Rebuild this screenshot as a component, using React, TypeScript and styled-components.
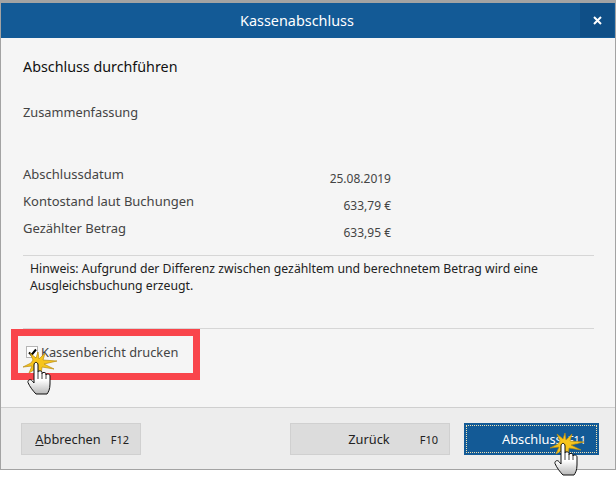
import React from 'react';
import styled, { createGlobalStyle } from 'styled-components';

const GlobalStyle = createGlobalStyle`
  html, body {
    margin: 0;
    padding: 0;
    background: #fff;
  }
  body {
    font-family: "Noto Sans", "Open Sans", sans-serif;
  }
`;

const Page = styled.div`
  width: 616px;
  height: 477px;
  position: relative;
  overflow: hidden;
  padding-bottom: 7px;
  box-sizing: border-box;
`;

const Dialog = styled.div`
  height: 470px;
  box-sizing: border-box;
  display: flex;
  flex-direction: column;
  background: #f5f5f5;
  border-top: 3px solid #a3a3a3;
  border-left: 1px solid #a3a3a3;
  border-right: 1px solid #a3a3a3;
  border-bottom: 1px solid #a3a3a3;
`;

const TitleBar = styled.div`
  height: 35px;
  flex: none;
  position: relative;
  display: flex;
  align-items: center;
  justify-content: center;
  padding-right: 22px;
  background: #135a96;
  color: #fff;
  font-size: 14.4px;
`;

const CloseButton = styled.div`
  position: absolute;
  right: 1px;
  top: 0;
  bottom: 1px;
  width: 34px;
  display: flex;
  align-items: center;
  justify-content: center;
  background: #0f4f87;
`;

const Content = styled.div`
  flex: 1;
  padding: 18px 21px 0 22px;
  display: flex;
  flex-direction: column;
`;

const Heading = styled.h1`
  margin: 0;
  font-size: 14.3px;
  font-weight: 400;
  line-height: 22px;
  color: #111;
`;

const SectionLabel = styled.div`
  margin-top: 25px;
  font-size: 12.8px;
  line-height: 18px;
  color: #444;
`;

const Rows = styled.div`
  margin-top: 44px;
  display: flex;
  flex-direction: column;
  gap: 9px;
`;

const Row = styled.div`
  display: flex;
  justify-content: space-between;
  height: 18px;
  padding-right: 203px;
  font-size: 13px;
  line-height: 18px;
  color: #444;
`;

const Value = styled.span`
  position: relative;
  top: 5px;
  font-size: 12px;
`;

const Notice = styled.div`
  margin-top: 18px;
  border-top: 1px solid #d6d6d6;
  border-bottom: 1px solid #d6d6d6;
  padding: 4px 8px 0 7px;
  height: 68px;
  box-sizing: content-box;
  font-size: 12.25px;
  line-height: 17px;
  color: #222;
`;

const CheckRow = styled.label`
  margin-top: 14px;
  display: flex;
  align-items: center;
  gap: 3px;
  height: 18px;
  font-size: 12.8px;
  color: #444;
`;

const CheckBox = styled.span`
  width: 10px;
  height: 10px;
  margin-left: 3px;
  border: 1px solid #b5b5b5;
  background: #fff;
  display: flex;
  align-items: center;
  justify-content: center;
`;

const Footer = styled.div`
  height: 62px;
  flex: none;
  box-sizing: border-box;
  border-top: 1px solid #cfcfcf;
  background: #ededed;
  padding: 15px 15px 0 20px;
  display: flex;
  align-items: flex-start;
`;

const ActionButton = styled.div<{ $width: number; $primary?: boolean; $gap: number; $pad: number }>`
  width: ${p => p.$width}px;
  height: 32px;
  box-sizing: border-box;
  display: flex;
  align-items: center;
  justify-content: flex-end;
  gap: ${p => p.$gap}px;
  padding-right: ${p => p.$pad}px;
  font-size: 12.8px;
  color: ${p => (p.$primary ? '#fff' : '#222')};
  background: ${p => (p.$primary ? '#135a96' : '#dcdcdc')};
  border: 1px solid ${p => (p.$primary ? '#135a96' : '#d0d0d0')};
  ${p => p.$primary && 'outline: 1px dotted #f0e2b0; outline-offset: -3px;'}
`;

const KeyHint = styled.span`
  font-size: 11px;
`;

const Spacer = styled.div<{ $width: number }>`
  width: ${p => p.$width}px;
  flex: none;
`;

const Mnemonic = styled.span`
  text-decoration: underline;
`;

const Highlight = styled.div`
  position: absolute;
  left: 11px;
  top: 329px;
  width: 189px;
  height: 51px;
  box-sizing: border-box;
  border: 7px solid #f9454b;
  pointer-events: none;
`;

const ClickMark = styled.svg<{ $x: number; $y: number }>`
  position: absolute;
  left: ${p => p.$x}px;
  top: ${p => p.$y}px;
  pointer-events: none;
`;

function HandClick({ x, y, id }: { x: number; y: number; id: string }) {
  return (
    <ClickMark $x={x} $y={y} width="36" height="44" viewBox="0 0 36 44">
      <polygon
        points="10,8 7,1 13,6 15,0 16,7 22,1 20,8 34,9 21,12 31,17 19,15 18,23 14,16 6,21 9,14 0,15 8,11"
        fill="#f7c51c"
        stroke="#b98d12"
        strokeWidth="0.7"
      />
      <defs>
        <linearGradient id={id} x1="0" y1="0" x2="0" y2="1">
          <stop offset="0.55" stopColor="#ffffff" />
          <stop offset="1" stopColor="#b8b8b8" />
        </linearGradient>
      </defs>
      <path
        d="M11 13 C11 9.5 15 9.5 15 13 L15 20 C15 18.4 19 18.4 19 20.4 L19 21.5 C19 20 23 20 23 22 L23 23 C23 21.4 27 21.6 27 24 L27 32 C27 37 25.5 40 24 42 L13 42 C10.5 39.5 6.5 34.5 5 30.5 C4.4 28 7.4 26.6 9 28.6 L11 31 Z"
        fill={`url(#${id})`}
        stroke="#111"
        strokeWidth="1"
        strokeLinejoin="round"
      />
      <path d="M15 20 L15 27 M19 21 L19 27 M23 22.5 L23 27" stroke="#111" strokeWidth="0.8" fill="none" />
    </ClickMark>
  );
}

export default function App() {
  return (
    <>
      <GlobalStyle />
      <Page>
        <Dialog>
          <TitleBar>
            Kassenabschluss
            <CloseButton>
              <svg width="9" height="9" viewBox="0 0 9 9">
                <path d="M1 1 L8 8 M8 1 L1 8" stroke="#fff" strokeWidth="2" />
              </svg>
            </CloseButton>
          </TitleBar>
          <Content>
            <Heading>Abschluss durchführen</Heading>
            <SectionLabel>Zusammenfassung</SectionLabel>
            <Rows>
              <Row>
                <span>Abschlussdatum</span>
                <Value>25.08.2019</Value>
              </Row>
              <Row>
                <span>Kontostand laut Buchungen</span>
                <Value>633,79 €</Value>
              </Row>
              <Row>
                <span>Gezählter Betrag</span>
                <Value>633,95 €</Value>
              </Row>
            </Rows>
            <Notice>
              Hinweis: Aufgrund der Differenz zwischen gezähltem und berechnetem Betrag wird eine
              Ausgleichsbuchung erzeugt.
            </Notice>
            <CheckRow>
              <CheckBox>
                <svg width="9" height="9" viewBox="0 0 9 9">
                  <path d="M1 4.5 L3.5 7 L8 1.5" stroke="#000" strokeWidth="2" fill="none" />
                </svg>
              </CheckBox>
              Kassenbericht drucken
            </CheckRow>
          </Content>
          <Footer>
            <ActionButton $width={120} $gap={10} $pad={11}>
              <span>
                <Mnemonic>A</Mnemonic>bbrechen
              </span>
              <KeyHint>F12</KeyHint>
            </ActionButton>
            <Spacer $width={149} />
            <ActionButton $width={160} $gap={30} $pad={11}>
              <span>Zurück</span>
              <KeyHint>F10</KeyHint>
            </ActionButton>
            <Spacer $width={14} />
            <ActionButton $width={135} $primary $gap={6} $pad={12}>
              <span>Abschluss</span>
              <KeyHint>F11</KeyHint>
            </ActionButton>
          </Footer>
        </Dialog>
        <Highlight />
        <HandClick x={23} y={352} id="gloveA" />
        <HandClick x={550} y={433} id="gloveB" />
      </Page>
    </>
  );
}
